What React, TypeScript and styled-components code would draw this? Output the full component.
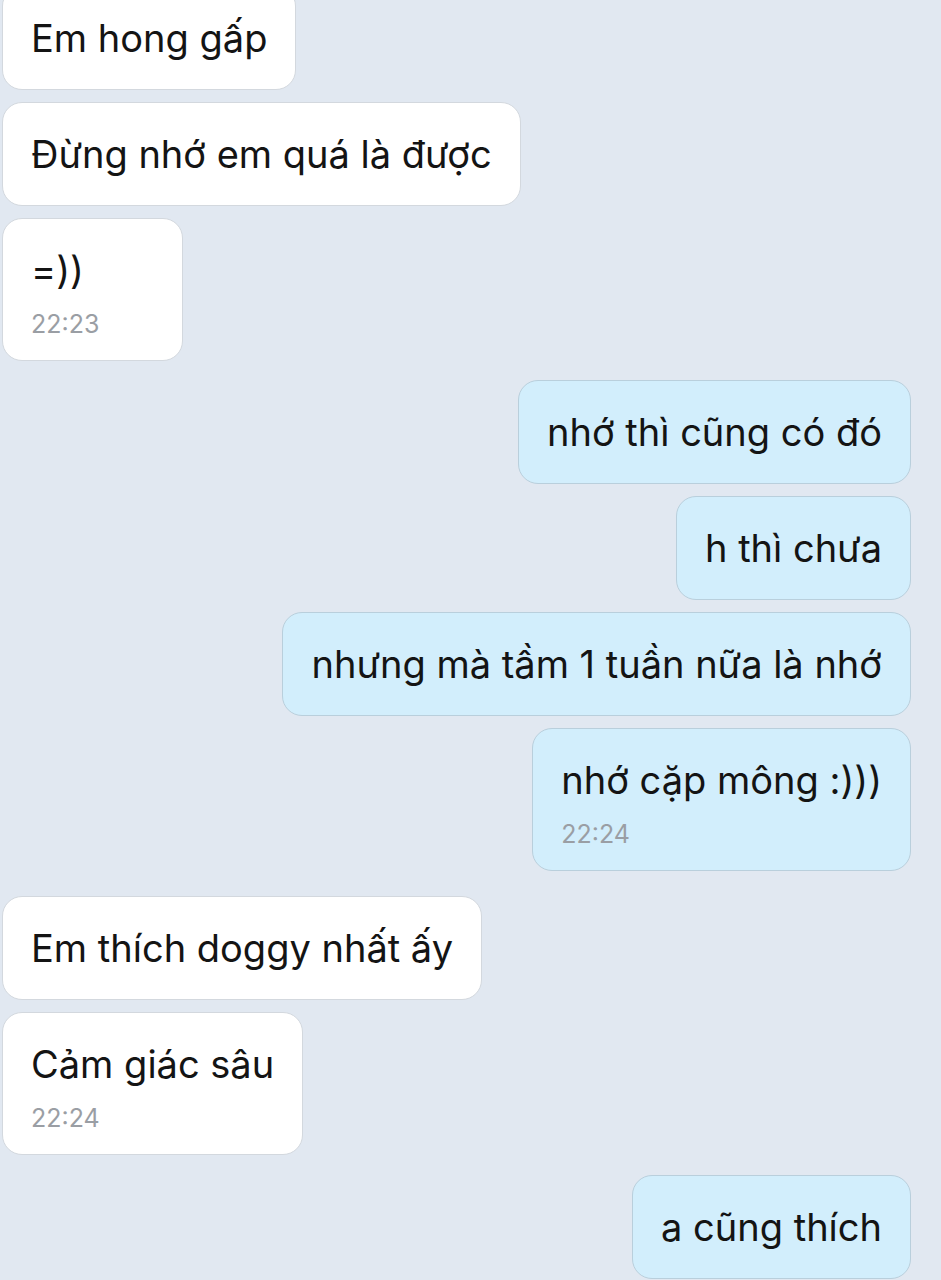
import React from 'react';
import styled, { createGlobalStyle } from 'styled-components';

type Side = 'in' | 'out';

interface Message {
  id: number;
  side: Side;
  text: string;
  time?: string;
  gapBefore?: number;
}

const messages: Message[] = [
  { id: 1, side: 'in', text: 'Em hong gấp' },
  { id: 2, side: 'in', text: 'Đừng nhớ em quá là được' },
  { id: 3, side: 'in', text: '=))', time: '22:23' },
  { id: 4, side: 'out', text: 'nhớ thì cũng có đó', gapBefore: 7 },
  { id: 5, side: 'out', text: 'h thì chưa' },
  { id: 6, side: 'out', text: 'nhưng mà tầm 1 tuần nữa là nhớ' },
  { id: 7, side: 'out', text: 'nhớ cặp mông :)))', time: '22:24' },
  { id: 8, side: 'in', text: 'Em thích doggy nhất ấy', gapBefore: 13 },
  { id: 9, side: 'in', text: 'Cảm giác sâu', time: '22:24' },
  { id: 10, side: 'out', text: 'a cũng thích', gapBefore: 8 },
];

const GlobalStyle = createGlobalStyle`
  html, body {
    margin: 0;
    padding: 0;
    background: #e1e8f1;
    overflow: hidden;
  }
  body {
    font-family: Inter, "Noto Sans", sans-serif;
    -webkit-font-smoothing: antialiased;
  }
`;

const Screen = styled.div`
  width: 941px;
  height: 1280px;
  overflow: hidden;
  background: #e1e8f1;
`;

const Thread = styled.div`
  display: flex;
  flex-direction: column;
  gap: 12px;
  margin-top: -14px;
  padding: 0 30px 0 2px;
`;

const Row = styled.div<{ $side: Side; $gap?: number }>`
  display: flex;
  justify-content: ${(p) => (p.$side === 'out' ? 'flex-end' : 'flex-start')};
  margin-top: ${(p) => p.$gap ?? 0}px;
`;

const Bubble = styled.div<{ $side: Side; $stamped?: boolean }>`
  box-sizing: border-box;
  display: flex;
  flex-direction: column;
  min-width: ${(p) => (p.$stamped ? '181px' : '0')};
  padding: 29px 28px;
  border-radius: 20px;
  background: ${(p) => (p.$side === 'out' ? '#d2eefc' : '#ffffff')};
  border: 1px solid ${(p) => (p.$side === 'out' ? '#b9cfdc' : '#d3d8de')};
`;

const Text = styled.div`
  font-size: 38px;
  line-height: 44px;
  color: #141414;
  white-space: nowrap;
`;

const Time = styled.div`
  margin-top: 17px;
  margin-bottom: -8px;
  font-size: 25px;
  line-height: 30px;
  color: #9a9ea4;
`;

export default function App() {
  return (
    <Screen>
      <GlobalStyle />
      <Thread>
        {messages.map((m) => (
          <Row key={m.id} $side={m.side} $gap={m.gapBefore}>
            <Bubble $side={m.side} $stamped={!!m.time}>
              <Text>{m.text}</Text>
              {m.time && <Time>{m.time}</Time>}
            </Bubble>
          </Row>
        ))}
      </Thread>
    </Screen>
  );
}
